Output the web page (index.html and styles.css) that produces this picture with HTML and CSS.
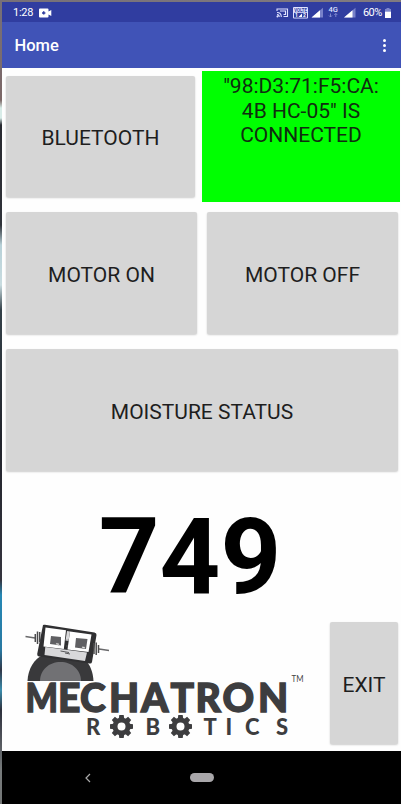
FILE: index.html
```
<!DOCTYPE html>
<html lang="en">
<head>
<meta charset="utf-8">
<title>Home</title>
<link rel="stylesheet" href="styles.css">
</head>
<body>
<div class="phone">
  <div class="status">
    <span class="time">1:28</span>
    <svg class="cam" width="13" height="10" viewBox="0 0 13 10"><path d="M1 .5H8.5Q9.5 .5 9.5 1.5V3.5L12.3 2V8L9.5 6.5V8.500Q9.500 9.500 8.500 9.500H1Q0 9.500 0 8.500V1.500Q0 .5 1 .5Z" fill="#fff"/><path d="M4.700 3.200V6.600M3 4.900H6.400" stroke="#303da0" stroke-width="1.500"/></svg>
    <svg class="signals" width="81" height="16" viewBox="276 4 81 16">
      <g fill="none" stroke="#dfe2ff" stroke-width="1.100"><path d="M277 10V8H287.500V15.500H283.500M277 11.500Q281.300 11.500 281.300 16M277 13.600Q279.200 13.600 279.200 16"/><path d="M280 10H285.500V13.500H283.500"/></g>
      <circle cx="277.400" cy="15.500" r=".9" fill="#dfe2ff"/>
      <rect x="293" y="6" width="15" height="11.500" rx="1" fill="#dfe2ff"/>
      <rect x="294" y="11.800" width="13" height="4.800" fill="#303da0"/>
      <text class="tiny dark" x="294.200" y="11.200" textLength="12.600" lengthAdjust="spacingAndGlyphs">VOLTE</text>
      <text class="tiny" x="295" y="16.300">1</text><text class="tiny" x="303" y="16.300">2</text>
      <path d="M298.500 16L302 12.500V16Z" fill="#fff"/>
      <path d="M311.500 16.500L323 6.800V16.500ZM344 16.500L355.500 6.800V16.500Z" fill="#7881c9"/>
      <path d="M311.500 16.500L320 9.300V16.500ZM344 16.500L352.500 9.300V16.500Z" fill="#fff"/>
      <text class="net" x="328.500" y="11.300">4G</text>
      <path d="M330.500 12.500V16M329 14.500L330.500 16L332 14.500M335.800 16V12.500M334.300 14L335.800 12.500L337.300 14" fill="none" stroke="#8790d2" stroke-width=".9"/>
    </svg>
    <span class="percent">60%</span>
    <svg class="battery" width="6" height="10" viewBox="0 0 6 10"><path d="M0 1H1.500V0H4.500V1H6V4H0Z" fill="#7d86cc"/><path d="M0 3.700H6V10H0Z" fill="#fff"/></svg>
  </div>
  <header class="bar"><h1>Home</h1><span class="more"><i></i><i></i><i></i></span></header>
  <main>
    <div class="row first">
      <button class="btn bluetooth">BLUETOOTH</button>
      <div class="connection">"98:D3:71:F5:CA:<br>4B HC-05" IS<br>CONNECTED</div>
    </div>
    <div class="row motors"><button class="btn">MOTOR ON</button><button class="btn">MOTOR OFF</button></div>
    <div class="row moisture"><button class="btn">MOISTURE STATUS</button></div>
    <div class="value">749</div>
    <div class="footer">
      <svg class="logo" width="288" height="122" viewBox="20 622 288 122">
        <defs>
          <g id="gear" fill="#3d3d3f">
            <circle r="6.500" fill="none" stroke="#3d3d3f" stroke-width="5"/>
            <g id="teeth"><path d="M-2.700-8L-2.200-11.500H2.200L2.700-8ZM-2.700 8L-2.200 11.500H2.200L2.700 8Z"/><path d="M-2.700-8L-2.200-11.500H2.200L2.700-8ZM-2.700 8L-2.200 11.500H2.200L2.700 8Z" transform="rotate(90)"/></g>
            <use href="#teeth" transform="rotate(45)"/>
          </g>
        </defs>
        <path d="M27.500 681C28 669 34 659 43 655L85 660C90 664 93 672 93.500 681Z" fill="#39393b"/>
        <path d="M40 681C40 670 49 662 60.500 662S81 670 81 681Z" fill="#717174"/>
        <path d="M43 625Q43.200 624.500 45 624.700L94.500 632.500Q96.800 633 96.500 635L92 662Q91.500 664 89.500 663.500L39 656.500Q37 656 37.200 654Z" fill="#303032"/>
        <path d="M45.500 627.500L66 630.300L63.800 649L43.500 646.500ZM70 631.500L91.500 634.500L88.500 652L67.500 649.500Z" fill="#fff"/>
        <path d="M67 631L70 631.500L68.500 641L65.500 640.500ZM45.300 647L87 652.500L85 661L44.500 655Z" fill="#d8d8da"/>
        <path d="M51 636L61 637V645.500L50 644ZM76 638L87.500 639L86 649L75 647.500Z" fill="#606063"/>
        <path d="M56 643L59 643.500V645L56 644.500ZM82 646.500L85 647V648.500L82 648ZM66 640H69M66 646H68" fill="#fff" stroke="#777" stroke-width=".5"/>
        <path d="M60.500 651L69 652.500M65 653L70 654" stroke="#59595b" stroke-width="1"/>
        <path d="M25.500 636.500L35 638M99 649L109 650.500" stroke="#69696b" stroke-width="1.300"/>
        <path d="M35.300 634V642M37.500 631.500V644M39.700 632V642M94 643V654M96.200 642.500V655M98.500 645V653" stroke="#4b4b4d" stroke-width="1.500"/>
        <text class="brand" y="711.500"><tspan x="25.500" textLength="32.500" lengthAdjust="spacingAndGlyphs">M</tspan><tspan x="58 80 109 141 170.500 195.500 222.500 258">ECHATRON</tspan></text>
        <text class="sub" y="734.500" x="86 145.500 203.500 225.500 245 276">RBTICS</text>
        <use href="#gear" x="121.500" y="726.500"/><use href="#gear" x="180.500" y="726.500"/>
        <text class="tm" x="291.500" y="681.500" textLength="12" lengthAdjust="spacingAndGlyphs">TM</text>
      </svg>
      <button class="btn exit">EXIT</button>
    </div>
  </main>
  <nav><svg class="back" width="6" height="10" viewBox="0 0 6 10"><path d="M5 1L1 5L5 9" fill="none" stroke="#aaa" stroke-width="1.200"/></svg><span class="pill"></span></nav>
</div>
</body>
</html>
```
FILE: styles.css
```
* { box-sizing: border-box; }
body {
  margin: 0;
  width: 401px;
  height: 804px;
  overflow: hidden;
  padding: 2px 0 0 2px;
  font-family: Roboto, sans-serif;
  background:
    linear-gradient(90deg, #777078, #817b80) 0 0 / 100% 2px no-repeat,
    linear-gradient(#777078 0, #7c6867 100px, #d8ece8 108px, #d8ece8 118px, #292a31 125px, #30333a 225px, #b8d1d8 245px, #c9dce0 285px, #344149 310px, #22242c 440px, #34343e 580px, #2688b5 595px, #2979a2 650px, #303747 670px, #3c8eae 690px, #2d303c 710px, #777b7c 770px, #747777 804px);
}
.phone { height: 802px; display: flex; flex-direction: column; background: #fefefe; }
.status {
  height: 20px;
  display: flex;
  align-items: center;
  background: #303da0;
  color: #fff;
  font-size: 11px;
  padding: 1px 10px 0 11px;
}
.status svg { display: block; flex: none; }
.time { width: 26px; letter-spacing: -.3px; }
.signals { margin-left: auto; }
.percent { width: 21px; margin-left: 6.500px; letter-spacing: -.6px; }
.battery { margin-left: 1px; }
.tiny { font: 700 5px Roboto, sans-serif; fill: #fff; }
.dark { fill: #303da0; }
.net { font: 500 7.500px Roboto, sans-serif; fill: #dfe2ff; }
.bar {
  height: 46px;
  display: flex;
  align-items: center;
  justify-content: space-between;
  padding: 0 15px 0 12.500px;
  background: #4053b7;
  color: #fff;
}
h1 { margin: 0; padding-top: 2px; font-size: 16.500px; font-weight: 500; line-height: 20px; }
.more { display: grid; gap: 2px; }
.more i { width: 3px; height: 3px; border-radius: 50%; background: #fff; }
main { height: 683px; }
.row { display: flex; }
.btn {
  border: 0;
  padding: 3px 0 0;
  height: 122px;
  border-radius: 2px;
  background: #d6d6d6;
  color: #1e1e1e;
  font: 400 21px Roboto, sans-serif;
  box-shadow: 0 1px 2px #0003;
  flex: 1;
}
.first { height: 141px; padding-top: 3px; }
.bluetooth { flex: 0 0 189px; margin: 5px 7px 0 4px; height: 121px; padding-top: 2px; }
.connection {
  flex: 0 0 198px;
  height: 131px;
  background: #00ff01;
  color: #102d10;
  font-size: 21px;
  line-height: 24.500px;
  padding-top: 3px;
  text-align: center;
}
.motors { padding: 3px 3px 0 4px; gap: 10px; height: 137px; }
.moisture { padding: 3px 3px 0 4px; height: 137px; }
.value {
  height: 139px;
  padding-top: 12px;
  text-align: center;
  font-size: 106px;
  line-height: 124px;
  font-weight: 700;
  color: #000;
  padding-right: 23px;
}
.footer { display: flex; padding: 0 3px 0 18px; }
.logo { display: block; flex: none; }
.exit { flex: 0 0 68px; margin: 0 0 0 auto; }
.brand { font: 900 39px Lato, sans-serif; fill: #3d3d3f; stroke: #3d3d3f; stroke-width: 1.400px; }
.sub { font: 900 22px Lato, sans-serif; fill: #3d3d3f; }
.tm { font: 400 8.500px Lato, sans-serif; fill: #444; }
nav { height: 53px; background: #000; display: flex; align-items: center; padding-left: 83px; }
.back { display: block; }
.pill { width: 24px; height: 9px; border-radius: 5px; background: #a9a7aa; margin-left: 99px; }
```
